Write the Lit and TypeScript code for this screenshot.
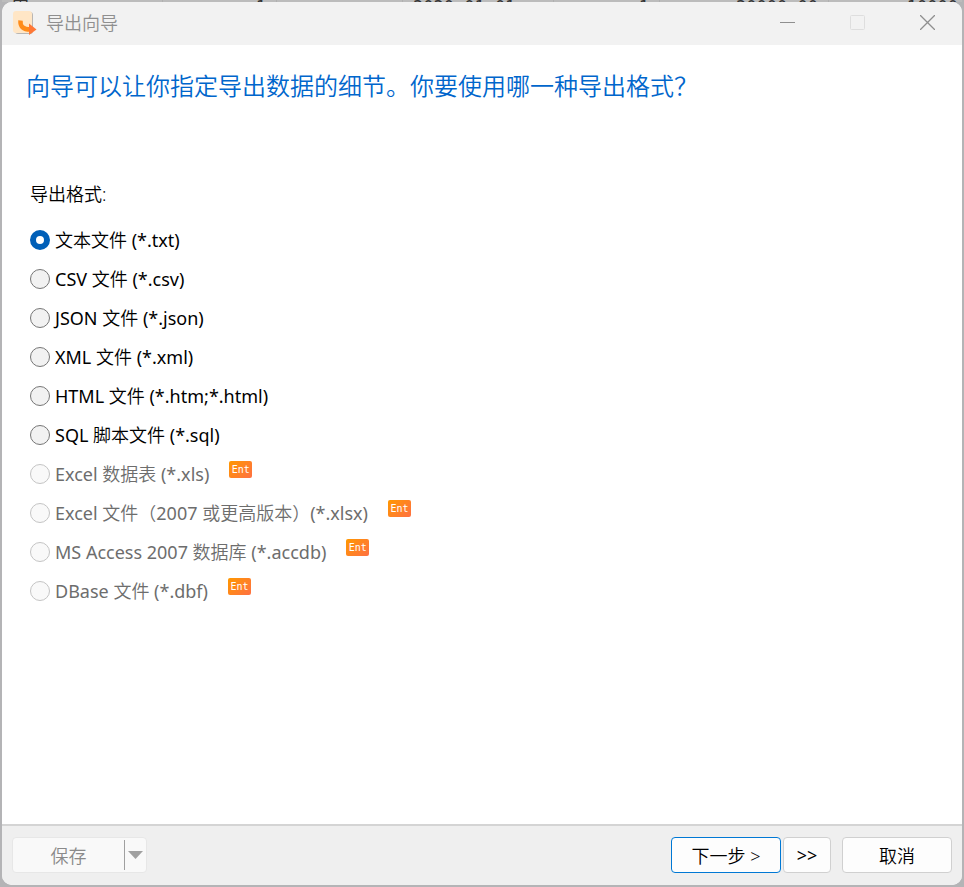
import { LitElement, html, css } from "lit";
import { customElement, state } from "lit/decorators.js";

interface Format {
  id: string;
  label: string;
  enterprise?: boolean;
}

const FORMATS: Format[] = [
  { id: "txt", label: "文本文件 (*.txt)" },
  { id: "csv", label: "CSV 文件 (*.csv)" },
  { id: "json", label: "JSON 文件 (*.json)" },
  { id: "xml", label: "XML 文件 (*.xml)" },
  { id: "html", label: "HTML 文件 (*.htm;*.html)" },
  { id: "sql", label: "SQL 脚本文件 (*.sql)" },
  { id: "xls", label: "Excel 数据表 (*.xls)", enterprise: true },
  { id: "xlsx", label: "Excel 文件（2007 或更高版本）(*.xlsx)", enterprise: true },
  { id: "accdb", label: "MS Access 2007 数据库 (*.accdb)", enterprise: true },
  { id: "dbf", label: "DBase 文件 (*.dbf)", enterprise: true },
];

@customElement("app-root")
export class AppRoot extends LitElement {
  @state() private selected = "txt";

  static styles = css`
    :host {
      display: flex;
      flex-direction: column;
      min-height: 100vh;
      box-sizing: border-box;
      padding: 0 2px 2px;
      background: #b4b4b6;
      font-family: "Noto Sans", "Noto Sans CJK SC DemiLight", "Noto Sans CJK SC", sans-serif;
      font-size: 18px;
      color: #000;
    }
    * {
      box-sizing: border-box;
    }
    /* Sliver of the data grid that shows above the dialog. */
    .behind {
      display: grid;
      grid-template-columns: 161fr 114fr 126fr 151fr 106fr 169fr 133fr;
      height: 2px;
      overflow: hidden;
      background: #bcbcbc;
      color: #333;
      font: 17px/14px "DejaVu Sans Mono", "Noto Sans CJK SC", monospace;
    }
    .behind span {
      height: 14px;
      padding: 0 10px;
      border-right: 1px solid #b0b0b0;
      text-align: right;
    }
    .behind .start {
      text-align: left;
    }
    .behind .edge {
      padding: 0 4px;
      border: 0;
    }
    .window {
      flex: 1;
      display: flex;
      flex-direction: column;
      background: #fff;
      border-radius: 10px;
      overflow: hidden;
    }
    .titlebar {
      display: flex;
      align-items: center;
      height: 43px;
      padding: 0 0 2px 10px;
      background: #f2f2f2;
      color: #8f8f8f;
    }
    .logo {
      width: 26px;
      height: 26px;
      margin-right: 8px;
    }
    .title {
      flex: 1;
      padding-bottom: 2px;
      font-family: "Noto Sans CJK SC", sans-serif;
      font-weight: 350;
    }
    .caption {
      width: 70px;
      height: 40px;
      padding: 0;
      border: 0;
      background: none;
      display: grid;
      place-items: center;
      color: #8f8f8f;
    }
    .caption:disabled {
      color: #dedede;
    }
    main {
      flex: 1;
      padding: 22px 24px;
    }
    h1 {
      margin: 0;
      font-family: "Noto Sans CJK SC", sans-serif;
      font-size: 24px;
      line-height: 36px;
      font-weight: 350;
      color: #0066cc;
    }
    fieldset {
      margin: 77px 0 0;
      padding: 0 4px;
      border: 0;
    }
    legend {
      padding: 0;
      margin-bottom: 12px;
      line-height: 28px;
      font-weight: 350;
    }
    .option {
      display: flex;
      align-items: center;
      height: 39px;
    }
    .option label {
      margin-left: 5px;
      line-height: 28px;
    }
    .off label {
      color: #6d6d6d;
    }
    input {
      appearance: none;
      width: 20px;
      height: 20px;
      margin: 0;
      border: 1px solid #767676;
      border-radius: 50%;
      background: #f2f2f2;
    }
    input:checked {
      border: 6px solid #005fb8;
      background: #fff;
    }
    input:disabled {
      border-color: #c4c4c4;
      background: #f9f9f9;
    }
    .badge {
      align-self: flex-start;
      width: 23px;
      height: 17px;
      margin: 7px 0 0 20px;
      border-radius: 2px;
      background: linear-gradient(135deg, #ff9800, #ff7043);
      color: #fff;
      font: 10px/17px "DejaVu Sans Mono", monospace;
      text-align: center;
    }
    footer {
      display: flex;
      align-items: center;
      height: 61px;
      padding: 0 10px 2px;
      border-top: 2px solid #d4d4d4;
      background: #efefef;
    }
    .button {
      height: 36px;
      padding: 0;
      border: 1px solid #d0d0d0;
      border-radius: 4px;
      background: #fdfdfd;
      color: #000;
      font: inherit;
      font-weight: 350;
    }
    .next {
      width: 110px;
      border-color: #0078d4;
    }
    .skip {
      width: 48px;
      margin: 0 11px 0 2px;
      font-weight: 400;
    }
    .cancel {
      width: 110px;
    }
    .split {
      display: flex;
      align-items: center;
      width: 135px;
      height: 36px;
      margin-right: auto;
      border: 1px solid #e7e7e7;
      border-radius: 4px;
      background: #f9f9f9;
    }
    .split button {
      height: 30px;
      padding: 0;
      border: 0;
      background: none;
      color: #8a8a8a;
      font: inherit;
      font-weight: 350;
    }
    .split .save {
      flex: 1;
    }
    .split .more {
      display: grid;
      place-items: center;
      width: 22px;
      border-left: 1px solid #a0a0a0;
    }
  `;

  private renderOption(f: Format) {
    return html`
      <div class="option ${f.enterprise ? "off" : ""}">
        <input
          type="radio"
          name="format"
          id=${f.id}
          .checked=${this.selected === f.id}
          ?disabled=${f.enterprise}
          @change=${() => (this.selected = f.id)}
        />
        <label for=${f.id}>${f.label}</label>
        ${f.enterprise ? html`<span class="badge">Ent</span>` : ""}
      </div>
    `;
  }

  render() {
    return html`
      <div class="behind" aria-hidden="true">
        <span class="start">田</span>
        <span>1</span>
        <span></span>
        <span class="start">2020-01-01</span>
        <span>1</span>
        <span>20000.00</span>
        <span class="edge">10000</span>
      </div>
      <div class="window">
        <header class="titlebar">
          <svg class="logo" viewBox="0 0 26 26" aria-hidden="true">
            <rect x="3" y="2" width="18" height="22" rx="3" fill="#b9b6b3" />
            <rect x="1" y="1" width="19" height="22" rx="3" fill="#ffe6c6" />
            <path d="M8.500 10.500c-.5 6 2.500 9 10 9" fill="none" stroke="#ff8c1a" stroke-width="4.500" />
            <path d="M17 13.500l7.500 6-7.500 5.500z" fill="#ff7836" />
          </svg>
          <span class="title">导出向导</span>
          <button class="caption" aria-label="最小化">
            <svg width="15" height="15"><path d="M0 7.5h15" stroke="currentColor" /></svg>
          </button>
          <button class="caption" aria-label="最大化" disabled>
            <svg width="15" height="15"><rect x=".5" y=".5" width="14" height="14" rx="1" fill="none" stroke="currentColor" /></svg>
          </button>
          <button class="caption" aria-label="关闭">
            <svg width="15" height="15"><path d="M0 0l15 15M15 0L0 15" stroke="currentColor" stroke-width="1.300" /></svg>
          </button>
        </header>
        <main>
          <h1>向导可以让你指定导出数据的细节。你要使用哪一种导出格式？</h1>
          <fieldset>
            <legend>导出格式:</legend>
            ${FORMATS.map((f) => this.renderOption(f))}
          </fieldset>
        </main>
        <footer>
          <div class="split">
            <button class="save" disabled>保存</button>
            <button class="more" aria-label="更多保存选项" disabled>
              <svg width="15" height="8"><path d="M0 0h15L7.5 8z" fill="#a0a0a0" /></svg>
            </button>
          </div>
          <button class="button next">下一步 &gt;</button>
          <button class="button skip">&gt;&gt;</button>
          <button class="button cancel">取消</button>
        </footer>
      </div>
    `;
  }
}
